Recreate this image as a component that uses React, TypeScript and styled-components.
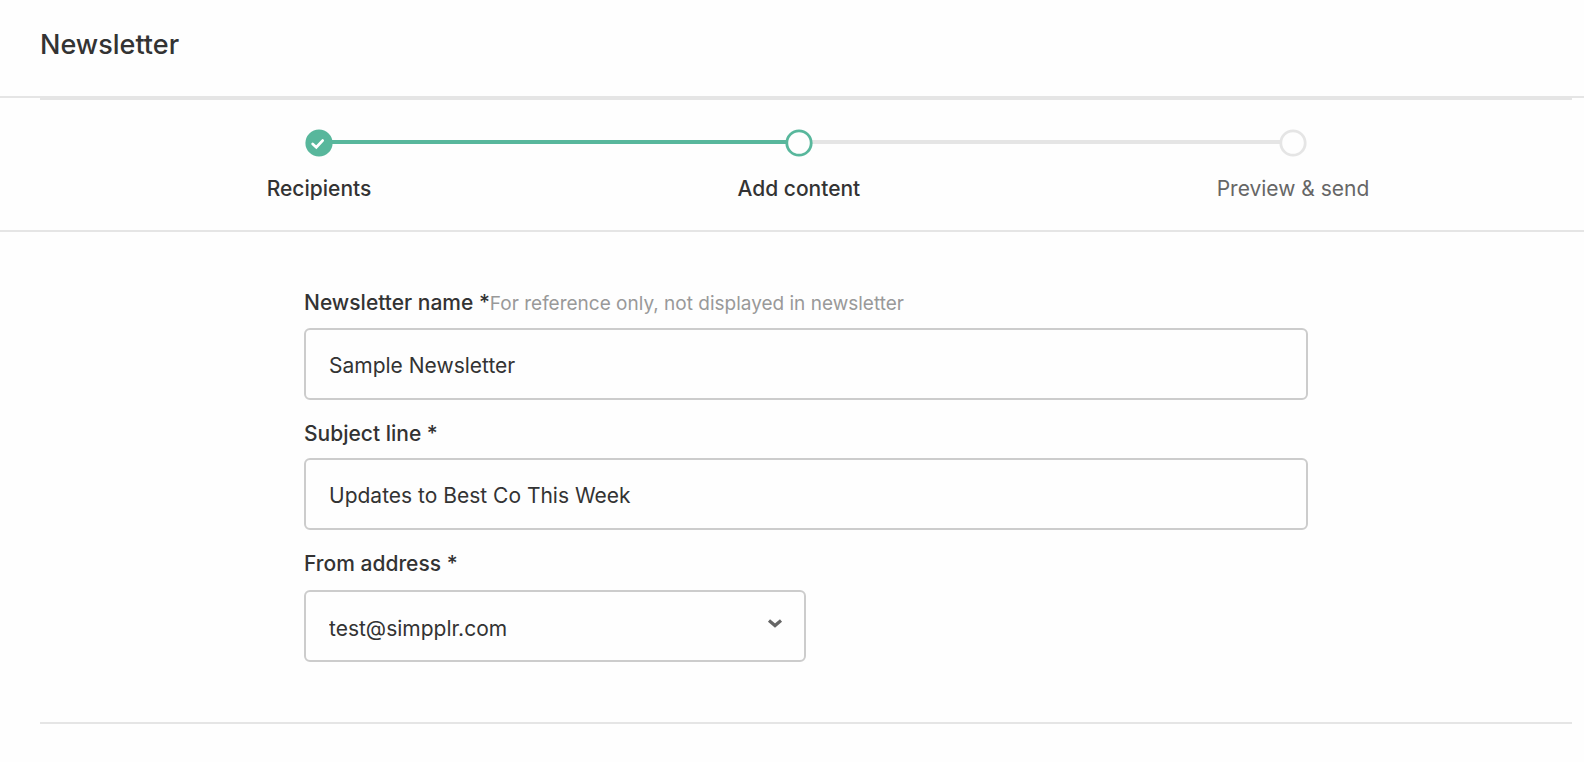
import React, { useState } from "react";
import styled, { createGlobalStyle } from "styled-components";

const color = {
  text: "#333333",
  muted: "#666666",
  hint: "#999999",
  line: "#e5e5e5",
  field: "#cccccc",
  accent: "#58b79c",
};

const GlobalStyle = createGlobalStyle`
  * { box-sizing: border-box; }
  body {
    margin: 0;
    background: #fefefe;
    color: ${color.text};
    font-family: Inter, "Liberation Sans", sans-serif;
    font-size: 21px;
    line-height: 28px;
  }
`;

const Header = styled.header`
  padding: 29px 40px 35px;
  border-bottom: 2px solid ${color.line};
`;

const Title = styled.h1`
  margin: 0;
  font-size: 27px;
  font-weight: 500;
  line-height: 32px;
`;

const Divider = styled.hr`
  height: 2px;
  margin: 0 12px 0 40px;
  border: 0;
  background: ${color.line};
`;

const StepsSection = styled.nav`
  padding: 28px 12px 27px 40px;
  border-bottom: 2px solid ${color.line};
`;

const StepList = styled.ol`
  display: flex;
  max-width: 1004px;
  margin: 0 auto;
  padding: 0;
  list-style: none;
`;

const Step = styled.li<{ $upcoming: boolean }>`
  display: flex;
  flex: none;
  flex-direction: column;
  align-items: center;
  gap: 17px;
  width: 30px;
  color: ${(p) => (p.$upcoming ? color.muted : color.text)};
  font-weight: ${(p) => (p.$upcoming ? 400 : 500)};
  white-space: nowrap;
`;

const Connector = styled.li<{ $weight: number; $done?: boolean }>`
  flex: ${(p) => p.$weight} 1 0;
  height: 4px;
  margin: 12px -3px 0;
  background: ${(p) => (p.$done ? color.accent : color.line)};
`;

const Marker = styled.svg`
  display: block;
  position: relative;
  flex: none;
  width: 30px;
  height: 30px;
`;

const Form = styled.form`
  display: flex;
  flex-direction: column;
  padding: 57px 12px 60px 40px;
`;

const Fields = styled.div`
  display: flex;
  flex-direction: column;
  gap: 20px;
  width: 100%;
  max-width: 1004px;
  margin: 0 auto;
`;

const Field = styled.div`
  display: flex;
  flex-direction: column;
  gap: 10px;
`;

const LabelRow = styled.div`
  display: flex;
  align-items: baseline;
`;

const Label = styled.label`
  font-weight: 500;
`;

const Hint = styled.span`
  color: ${color.hint};
  font-size: 19px;
`;

const controlStyles = `
  width: 100%;
  height: 72px;
  padding: 2px 23px 0;
  border: 2px solid ${color.field};
  border-radius: 6px;
  background: #fefefe;
  color: ${color.text};
  font: inherit;
`;

const TextInput = styled.input`
  ${controlStyles}
`;

const SelectBox = styled.div`
  display: grid;
  align-items: center;
  width: 50%;
  margin-top: 2px;
  & > * { grid-area: 1 / 1; }
`;

const Select = styled.select`
  ${controlStyles}
  padding-top: 5px;
  appearance: none;
`;

const Chevron = styled.svg`
  justify-self: end;
  width: 16px;
  height: 12px;
  margin: 0 23px 6px 0;
  pointer-events: none;
`;

type StepState = "done" | "current" | "upcoming";

function StepMarker({ state }: { state: StepState }) {
  const stroke = state === "upcoming" ? color.line : color.accent;
  return (
    <Marker viewBox="0 0 30 30" aria-hidden="true">
      <circle cx="15" cy="15" r="12.2" fill={state === "done" ? stroke : "#fefefe"} stroke={stroke} strokeWidth="2.8" />
      {state === "done" && (
        <path d="M8.7 16l3.6 3.2 6.3-6.6" fill="none" stroke="#fff" strokeWidth="2.8" strokeLinecap="round" />
      )}
    </Marker>
  );
}

export default function App() {
  const [name, setName] = useState("Sample Newsletter");
  const [subject, setSubject] = useState("Updates to Best Co This Week");

  return (
    <>
      <GlobalStyle />
      <Header>
        <Title>Newsletter</Title>
      </Header>
      <Divider />
      <StepsSection aria-label="Progress">
        <StepList>
          <Step $upcoming={false}>
            <StepMarker state="done" />
            <span>Recipients</span>
          </Step>
          <Connector $weight={32} $done aria-hidden="true" />
          <Step $upcoming={false} aria-current="step">
            <StepMarker state="current" />
            <span>Add content</span>
          </Step>
          <Connector $weight={33} aria-hidden="true" />
          <Step $upcoming>
            <StepMarker state="upcoming" />
            <span>Preview &amp; send</span>
          </Step>
        </StepList>
      </StepsSection>
      <Form>
        <Fields>
          <Field>
            <LabelRow>
              <Label htmlFor="name">Newsletter name *</Label>
              <Hint id="name-hint">For reference only, not displayed in newsletter</Hint>
            </LabelRow>
            <TextInput
              id="name"
              aria-describedby="name-hint"
              value={name}
              onChange={(e) => setName(e.target.value)}
            />
          </Field>
          <Field>
            <Label htmlFor="subject">Subject line *</Label>
            <TextInput id="subject" value={subject} onChange={(e) => setSubject(e.target.value)} />
          </Field>
          <Field>
            <Label htmlFor="from">From address *</Label>
            <SelectBox>
              <Select id="from">
                <option>test@simpplr.com</option>
              </Select>
              <Chevron viewBox="0 0 16 12" aria-hidden="true">
                <path d="M2 3.6l6 5 6-5" fill="none" stroke={color.muted} strokeWidth="3.2" />
              </Chevron>
            </SelectBox>
          </Field>
        </Fields>
      </Form>
      <Divider />
    </>
  );
}
